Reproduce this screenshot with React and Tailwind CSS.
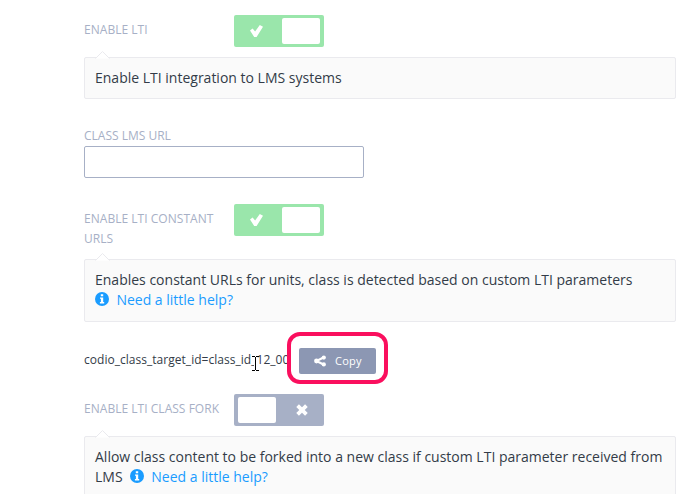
import React from "react";

function Check() {
  return (
    <svg className="ml-4 h-3 w-[13px]" viewBox="0 0 13 12" fill="#fff">
      <path d="M0 5.6 2.6 3.4 5.1 6.4 9.8 0 13 1.8 6.6 12H4.2Z" />
    </svg>
  );
}

function Cross() {
  return (
    <svg className="mr-4 h-3 w-3" viewBox="0 0 12 12" fill="none" stroke="#fff" strokeWidth="3.8">
      <path d="M1.6 1.6 10.4 10.4M10.4 1.6 1.6 10.4" />
    </svg>
  );
}

function Share() {
  return (
    <svg className="h-3 w-3" viewBox="0 0 12 12" fill="#fff">
      <path d="M2.5 6 9.5 2.6M2.5 6 9.5 9.4" stroke="#fff" strokeWidth="2.2" />
      <circle cx="2.5" cy="6" r="2.4" />
      <circle cx="9.8" cy="2.6" r="2.1" />
      <circle cx="9.8" cy="9.4" r="2.1" />
    </svg>
  );
}

function Info() {
  return (
    <svg className="mr-[7.4px] inline-block h-3.5 w-3.5 align-[-1px]" viewBox="0 0 14 14">
      <circle cx="7" cy="7" r="7" fill="#1a9cff" />
      <path d="M5.8 2.2H8.2V4.2H5.8ZM5 5.4H8.2V9.9H9.2V11.4H4.9V9.9H5.9V6.8H5Z" fill="#fff" />
    </svg>
  );
}

function Toggle({ on }) {
  return on ? (
    <div className="flex h-8 w-[90px] items-center justify-between rounded-[2px] bg-[#9ae6ab] pr-1">
      <Check />
      <div className="h-[26px] w-[38px] rounded-[2px] bg-white" />
    </div>
  ) : (
    <div className="flex h-8 w-[90px] items-center justify-between rounded-[2px] bg-[#a7b0c6] pl-1">
      <div className="h-[26px] w-[38px] rounded-[2px] bg-white" />
      <Cross />
    </div>
  );
}

function Row({ label, on }) {
  return (
    <div className="flex items-start">
      <div className="w-[150px] pt-[5px] pr-3 text-[12px] leading-5 tracking-[0.03px] text-[#a7b0c6]">{label}</div>
      <Toggle on={on} />
    </div>
  );
}

function Hint({ children, className }) {
  return (
    <div className={"relative w-[592px] rounded-[2px] border border-[#eaeaee] bg-[#fafafa] px-2.5 text-[14px] leading-5 text-[#333c48] " + className}>
      <svg className="absolute -top-[7px] left-2.5 h-2 w-[15px]" viewBox="0 0 15 8">
        <path d="M0.5 7.5 7.5 0.5 14.5 7.5" fill="#fff" stroke="#eaeaee" />
      </svg>
      {children}
    </div>
  );
}

function Help() {
  return (
    <span className="text-[#1a9cff]">
      <Info />
      Need a little help?
    </span>
  );
}

export default function App() {
  return (
    <div className="h-[494px] w-[696px] overflow-hidden bg-white pt-[15px] pl-[84px] font-['Open_Sans',sans-serif]">
      <div className="h-[42px]">
        <Row label="ENABLE LTI" on />
      </div>
      <Hint className="h-[42px] pt-2.5">Enable LTI integration to LMS systems</Hint>

      <div className="mt-[27px] text-[12px] leading-5 text-[#a7b0c6]">CLASS LMS URL</div>
      <input aria-label="Class LMS URL" className="block h-8 w-[280px] rounded-[2px] border border-[#a7b0c6] bg-white outline-none" />

      <div className="mt-[26px] h-[55px]">
        <Row label="ENABLE LTI CONSTANT URLS" on />
      </div>
      <Hint className="h-[63px] pt-2.5">
        Enables constant URLs for units, class is detected based on custom LTI parameters
        <br />
        <Help />
      </Hint>

      <div className="relative mt-2.5 flex h-[52px] items-center">
        <div className="w-[203px] pt-1 text-[12px] leading-5 tracking-[0.03px] whitespace-nowrap text-[#333c48]">
          codio_class_target_id=class_id_12_00
        </div>
        <div className="relative flex h-[52px] w-[101px] justify-center rounded-[13px] border-4 border-[#fa0f5e] bg-white pt-3">
          <button className="flex h-[26px] w-[77px] items-center rounded-[2px] bg-[#8c97b3] pl-[15px] text-[11px] text-white">
            <Share />
            <span className="ml-[9px] pt-px tracking-[0.2px]">Copy</span>
          </button>
        </div>
        <svg className="absolute top-[23px] left-[167px] h-[17px] w-[9px]" viewBox="0 0 9 17" fill="none">
          <path d="M4.5 2V15" stroke="#fff" strokeWidth="3" />
          <path d="M1 1.5H4M5 1.5H8M4.5 2V15M1 15.5H4M5 15.5H8" stroke="#000" strokeWidth="1" />
        </svg>
      </div>

      <div className="mt-2.5 h-[42px]">
        <Row label="ENABLE LTI CLASS FORK" />
      </div>
      <Hint className="h-[63px] pt-2.5">
        Allow class content to be forked into a new class if custom LTI parameter received from LMS&nbsp; <Help />
      </Hint>
    </div>
  );
}
